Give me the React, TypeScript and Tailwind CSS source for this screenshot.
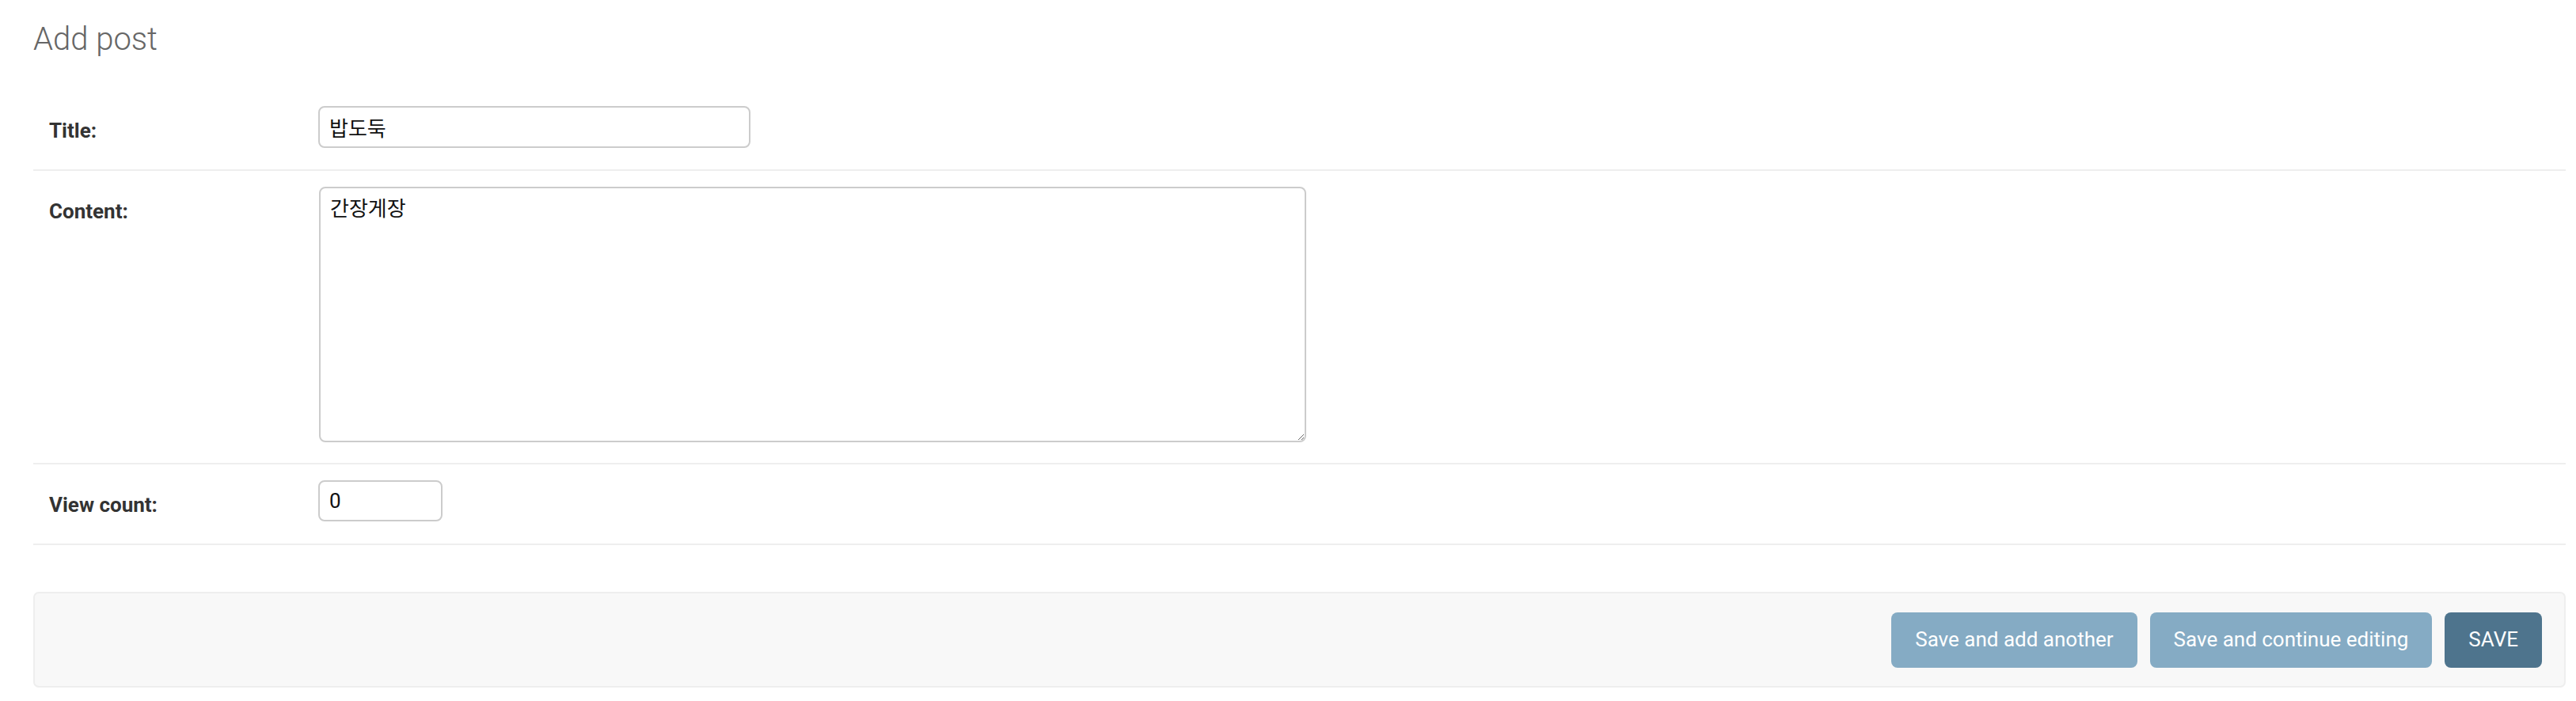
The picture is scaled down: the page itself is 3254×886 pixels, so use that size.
import { useState } from "react";

const font = "font-['Roboto','Noto_Sans_CJK_KR',sans-serif]";

const App = () => {
  const [title, setTitle] = useState("밥도둑");
  const [content, setContent] = useState("간장게장");
  const [viewCount, setViewCount] = useState("0");

  return (
    <div className={`min-h-screen bg-white pl-[42px] pr-[13px] ${font}`}>
      <h1 className="pt-[27px] text-[40px] leading-[46px] font-light text-[#666]">Add post</h1>

      <fieldset className="mt-[43px]">
        {/* title */}
        <div className="flex h-[100px] border-b-2 border-[#eee] pt-[18px] pl-[20px]">
          <label className="w-[340px] pt-[16px] text-[26px] leading-[30px] font-bold text-[#333]">Title:</label>
          <input
            value={title}
            onChange={(e) => setTitle(e.target.value)}
            className={`h-[53px] w-[546px] rounded-[8px] border-2 border-[#ccc] px-[12px] text-[26px] text-[#111] outline-none ${font}`}
          />
        </div>

        {/* content */}
        <div className="flex h-[371px] border-b-2 border-[#eee] pt-[20px] pl-[20px]">
          <label className="w-[341px] pt-[16px] text-[26px] leading-[30px] font-bold text-[#333]">Content:</label>
          <textarea
            value={content}
            onChange={(e) => setContent(e.target.value)}
            className={`h-[323px] w-[1247px] rounded-[8px] border-2 border-[#ccc] px-[12px] pt-[8px] pb-[10px] text-[26px] leading-[1.4] text-[#111] outline-none ${font}`}
          />
        </div>

        {/* view count */}
        <div className="flex h-[102px] border-b-2 border-[#eee] pt-[20px] pl-[20px]">
          <label className="w-[340px] pt-[16px] text-[26px] leading-[30px] font-bold text-[#333]">View count:</label>
          <input
            value={viewCount}
            onChange={(e) => setViewCount(e.target.value)}
            className={`h-[52px] w-[157px] rounded-[8px] border-2 border-[#ccc] px-[12px] text-[26px] text-[#111] outline-none ${font}`}
          />
        </div>
      </fieldset>

      <div className="mt-[59px] flex h-[121px] items-center justify-end gap-[16px] rounded-[7px] border-2 border-[#eee] bg-[#f8f8f8] pr-[28px]">
        <button className="h-[70px] rounded-[8px] bg-[#85abc4] px-[30px] text-[26px] text-white">Save and add another</button>
        <button className="h-[70px] rounded-[8px] bg-[#85abc4] px-[30px] text-[26px] text-white">Save and continue editing</button>
        <button className="h-[70px] rounded-[8px] bg-[#4e748d] px-[30px] text-[26px] text-white">SAVE</button>
      </div>
    </div>
  );
};

export default App;
